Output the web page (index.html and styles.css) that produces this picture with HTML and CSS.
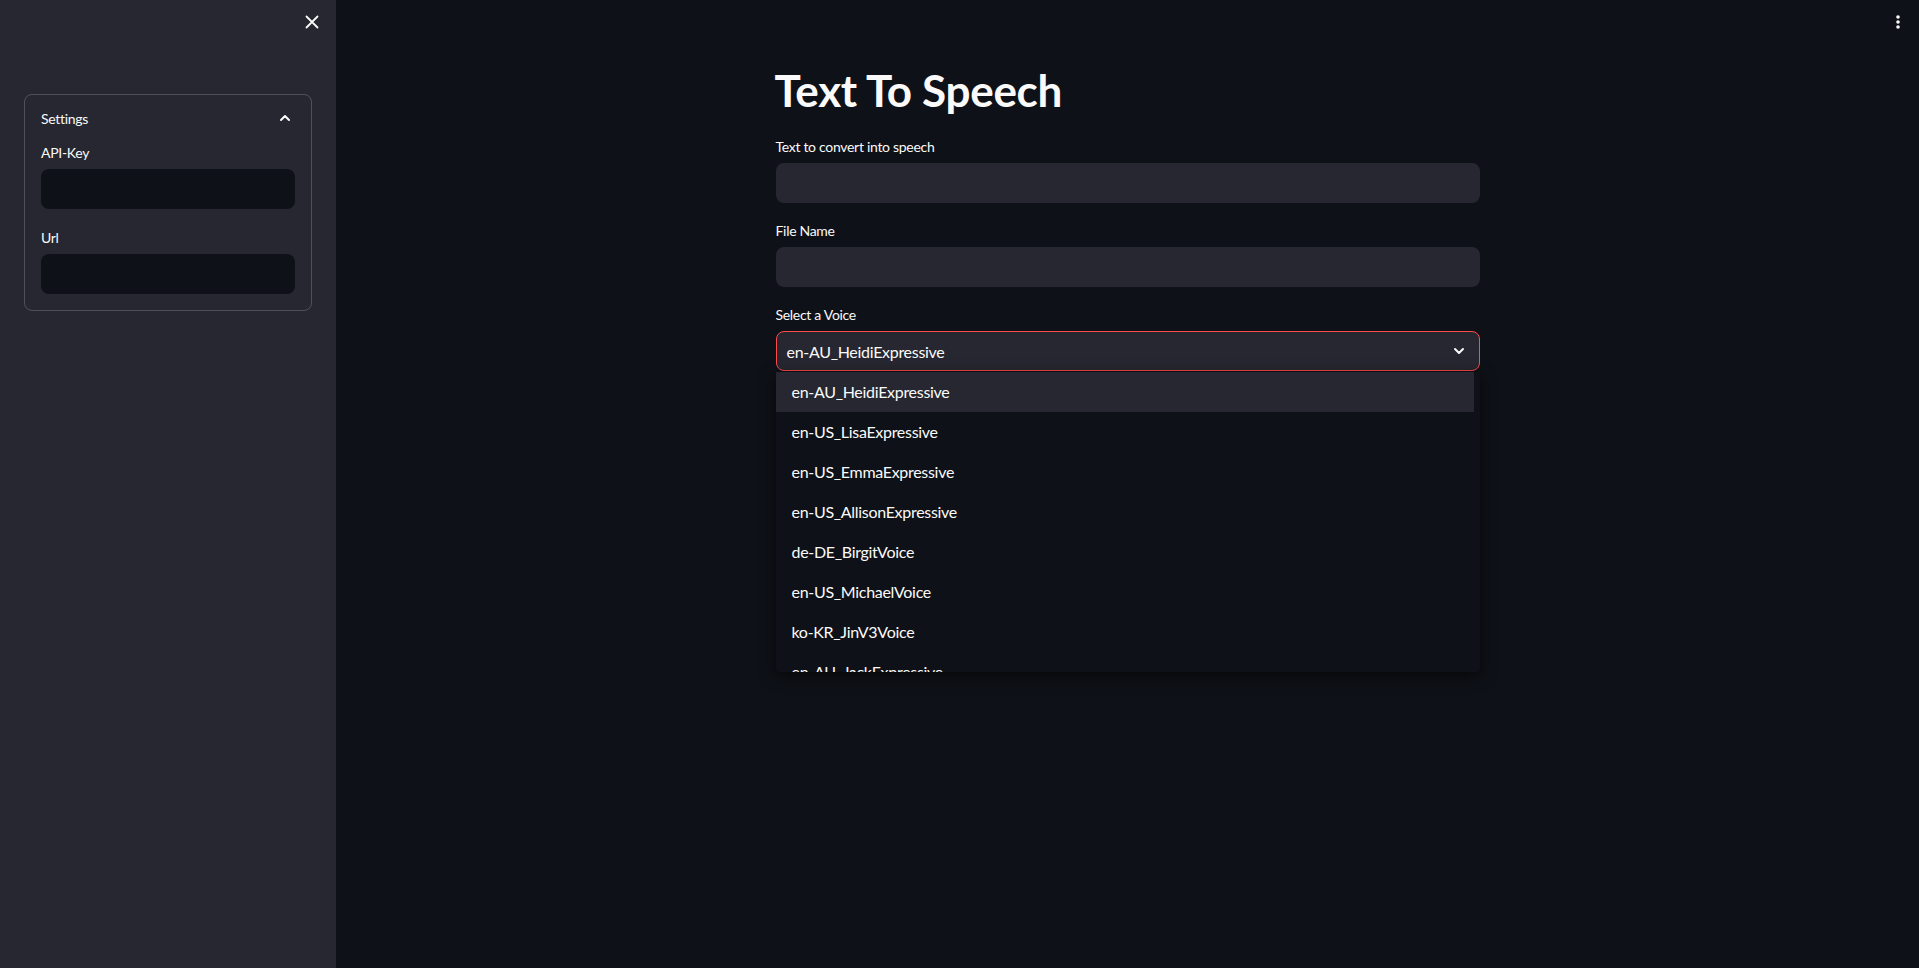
FILE: index.html
```html
<!DOCTYPE html>
<html lang="en">
<head>
<meta charset="utf-8">
<title>Text To Speech</title>
<link rel="stylesheet" href="styles.css">
</head>
<body>
<div class="app">
  <aside class="sidebar">
    <div class="sidebar-top">
      <button class="icon-btn close-btn" aria-label="Close sidebar">
        <svg width="14" height="14" viewBox="0 0 14 14"><path d="M1.5 1.5 L12.5 12.5 M12.5 1.5 L1.5 12.5" stroke="#fafafa" stroke-width="1.8" stroke-linecap="round"/></svg>
      </button>
    </div>
    <div class="sidebar-content">
      <div class="expander">
        <div class="expander-header">
          <span>Settings</span>
          <svg class="chev-up" width="20" height="20" viewBox="0 0 20 20"><path d="M6 12 L10 8 L14 12" fill="none" stroke="#fafafa" stroke-width="2" stroke-linecap="round" stroke-linejoin="round"/></svg>
        </div>
        <div class="expander-body">
          <div class="field">
            <label class="field-label">API-Key</label>
            <div class="input dark"></div>
          </div>
          <div class="field">
            <label class="field-label">Url</label>
            <div class="input dark"></div>
          </div>
        </div>
      </div>
    </div>
  </aside>
  <main class="main">
    <div class="topbar">
      <button class="icon-btn menu-btn" aria-label="Main menu">
        <svg width="6" height="16" viewBox="0 0 6 16"><circle cx="3" cy="3" r="1.8" fill="#fafafa"/><circle cx="3" cy="8" r="1.8" fill="#fafafa"/><circle cx="3" cy="13" r="1.8" fill="#fafafa"/></svg>
      </button>
    </div>
    <div class="block">
      <h1 class="title">Text To Speech</h1>
      <div class="field">
        <label class="field-label">Text to convert into speech</label>
        <div class="input"></div>
      </div>
      <div class="field">
        <label class="field-label">File Name</label>
        <div class="input"></div>
      </div>
      <div class="field select-field">
        <label class="field-label">Select a Voice</label>
        <div class="select">
          <span class="select-value">en-AU_HeidiExpressive</span>
          <svg width="12" height="8" viewBox="0 0 12 8"><path d="M2 2 L6 6 L10 2" fill="none" stroke="#fafafa" stroke-width="2" stroke-linecap="round" stroke-linejoin="round"/></svg>
        </div>
        <ul class="dropdown">
          <li class="option active">en-AU_HeidiExpressive</li>
          <li class="option">en-US_LisaExpressive</li>
          <li class="option">en-US_EmmaExpressive</li>
          <li class="option">en-US_AllisonExpressive</li>
          <li class="option">de-DE_BirgitVoice</li>
          <li class="option">en-US_MichaelVoice</li>
          <li class="option">ko-KR_JinV3Voice</li>
          <li class="option">en-AU_JackExpressive</li>
        </ul>
      </div>
    </div>
  </main>
</div>
</body>
</html>
```

FILE: styles.css
```css
* { box-sizing: border-box; }
html, body { margin: 0; padding: 0; height: 100%; }
body {
  background: #0e1117;
  color: #fafafa;
  font-family: "Lato", "Liberation Sans", sans-serif;
  letter-spacing: -0.3px;
  overflow: hidden;
}
.app { display: flex; height: 968px; }
.icon-btn {
  background: none; border: 0; padding: 0; margin: 0;
  display: flex; align-items: center; justify-content: center; cursor: pointer;
}
.sidebar {
  width: 336px; flex: none;
  background: #262730;
  display: flex; flex-direction: column;
}
.sidebar-top {
  height: 44px;
  display: flex; justify-content: flex-end; align-items: center;
  padding-right: 17px;
}
.close-btn { width: 14px; height: 14px; }
.sidebar-content { padding: 50px 24px 0; }
.expander {
  border: 1px solid rgba(250, 250, 250, 0.2);
  border-radius: 8px;
}
.expander-header {
  height: 46px;
  padding: 0 16px;
  display: flex; align-items: center; justify-content: space-between;
  font-size: 14px;
}
.expander-body {
  padding: 0 16px 16px;
  display: flex; flex-direction: column; gap: 17px;
}
.field { display: flex; flex-direction: column; }
.field-label {
  font-size: 14px;
  line-height: 24px;
  height: 24px;
  margin-bottom: 4px;
}
.input {
  height: 40px;
  background: #262730;
  border-radius: 8px;
}
.input.dark { background: #0e1117; }
.main { flex: 1; display: flex; flex-direction: column; align-items: center; position: relative; }
.topbar {
  position: absolute; top: 0; right: 0;
  height: 44px; width: 60px;
  display: flex; align-items: center; justify-content: flex-end;
  padding-right: 18px;
}
.menu-btn { width: 6px; height: 16px; margin-top: -1px; }
.block {
  width: 704px;
  padding-top: 62px;
  display: flex; flex-direction: column; gap: 16px;
}
.title {
  margin: 0 0 0 -1px;
  font-size: 44px;
  font-weight: 700;
  line-height: 57px;
  height: 57px;
}
.select-field { position: relative; }
.select {
  height: 40px;
  background: #262730;
  border: 1px solid #ff4b4b;
  border-radius: 8px;
  display: flex; align-items: center; justify-content: space-between;
  padding: 0 14px 0 10px;
  font-size: 16px;
}
.dropdown {
  position: absolute; top: 69px; left: 0;
  width: 704px; height: 300px;
  margin: 0; padding: 0 6px 0 0; list-style: none;
  background: #0e1117;
  box-shadow: 0 4px 16px rgba(0, 0, 0, 0.6);
  overflow: hidden;
  border-radius: 0 0 4px 4px;
}
.option {
  height: 40px;
  line-height: 39px;
  padding-left: 16px;
  font-size: 16px;
}
.option.active { background: #262730; }
```
